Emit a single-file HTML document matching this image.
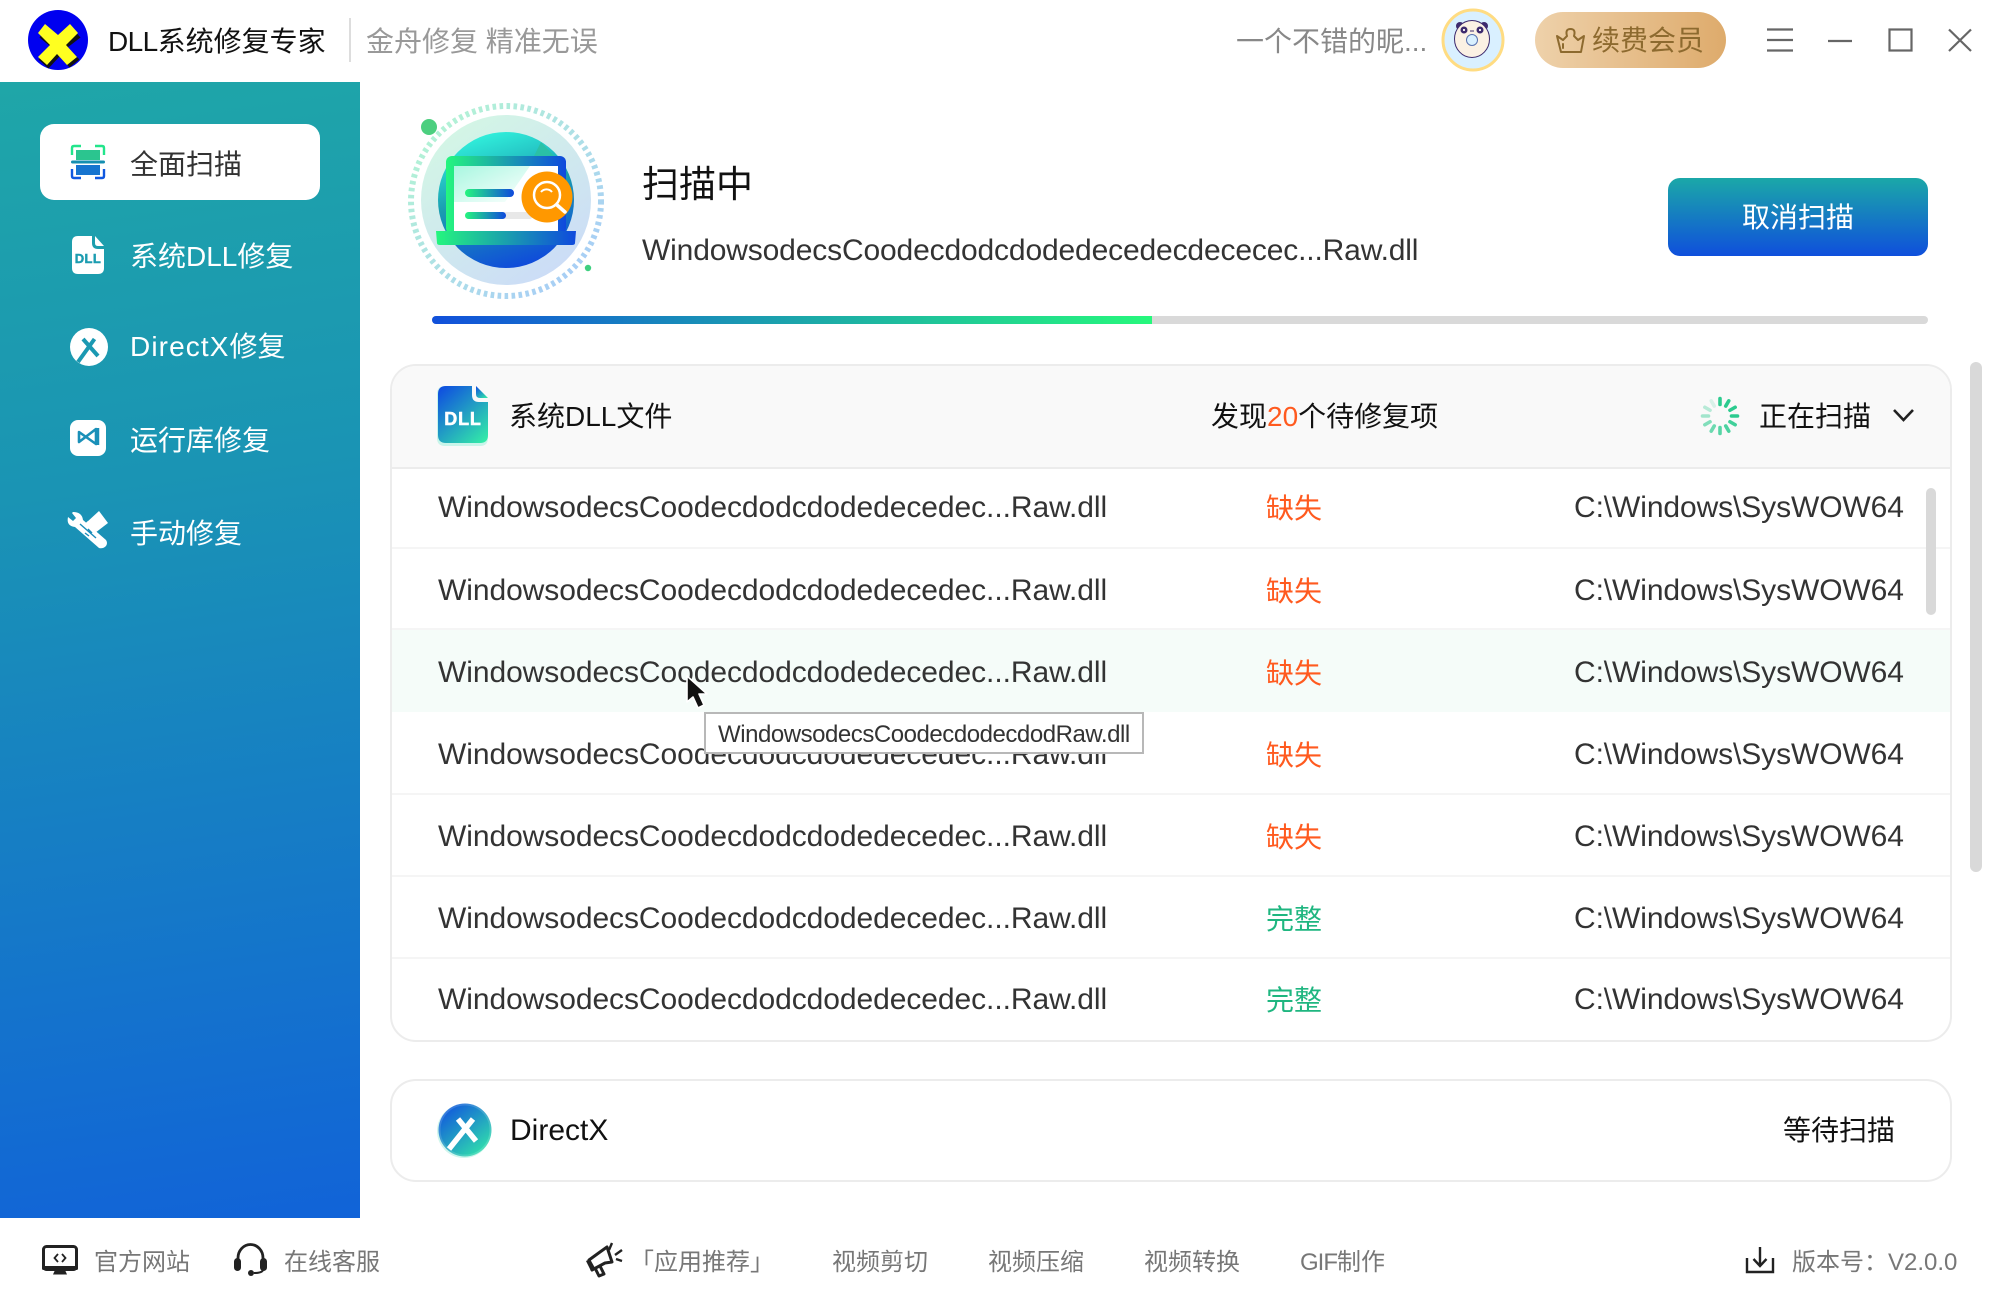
<!DOCTYPE html>
<html lang="zh-CN">
<head>
<meta charset="utf-8">
<title>DLL系统修复专家</title>
<style>
html,body{margin:0;padding:0;background:#fff}
body{width:2000px;height:1300px;position:relative;overflow:hidden;font-family:"Liberation Sans","Noto Sans CJK SC",sans-serif;color:#333}
.t{position:absolute;line-height:40px;height:40px;white-space:nowrap}
.abs{position:absolute}
svg{position:absolute;left:0;top:0;overflow:visible}
.side{position:absolute;left:0;top:82px;width:360px;height:1136px;background:linear-gradient(172deg,#1fa6a8 0%,#1a94b4 35%,#1163d8 100%)}
.active{position:absolute;left:40px;top:124px;width:280px;height:76px;background:#fff;border-radius:14px}
.nav{font-size:28px;color:#fff;left:130px}
.foot{font-size:24px;color:#777;top:1243px}
.card{position:absolute;left:390px;width:1562px;box-sizing:border-box;border:2px solid #ececec;border-radius:26px;background:#fff}
.name{left:438px;font-size:30px;letter-spacing:-.07px;color:#333}
.st{left:1266px;font-size:28px;color:#ff5a1f}
.ok{color:#1fb680}
.path{left:1574px;font-size:30px;color:#333;letter-spacing:-.1px}
.sep{position:absolute;left:392px;width:1558px;height:2px;background:#f5f5f5}
</style>
</head>
<body>
<div class="side"></div>
<div class="active"></div>

<div class="abs" style="left:349px;top:18px;width:2px;height:44px;background:#ddd"></div>
<div class="t" style="left:108px;top:22px;font-size:28px;color:#111"><span style="letter-spacing:-.6px">DLL</span>系统修复专家</div>
<div class="t" style="left:366px;top:22px;font-size:28px;color:#999">金舟修复 精准无误</div>
<div class="t" style="left:1236px;top:22px;font-size:28px;color:#888">一个不错的昵...</div>

<div class="abs" style="left:1535px;top:12px;width:191px;height:56px;border-radius:28px;background:linear-gradient(90deg,#eed1aa,#deab6c)"></div>
<div class="t" style="left:1592px;top:21px;font-size:28px;color:#8d6a2f">续费会员</div>

<div class="abs" style="left:1668px;top:178px;width:260px;height:78px;border-radius:12px;background:linear-gradient(180deg,#1ba8a8,#0f4fdc)"></div>
<div class="t" style="left:1742px;top:198px;font-size:28px;color:#fff">取消扫描</div>

<div class="t" style="left:642px;top:165px;font-size:37px;color:#111">扫描中</div>
<div class="t" style="left:642px;top:231px;font-size:30px;letter-spacing:-.15px;color:#333">WindowsodecsCoodecdodcdodedecedecdececec...Raw.dll</div>

<div class="abs" style="left:432px;top:316px;width:1496px;height:8px;border-radius:4px;background:#d9d9d9"></div>
<div class="abs" style="left:432px;top:316px;width:720px;height:8px;border-radius:4px 0 0 4px;background:linear-gradient(90deg,#1150db,#26f87c)"></div>

<div class="t nav" style="left:130px;top:145px;color:#333">全面扫描</div>
<div class="t nav" style="top:237px">系统DLL修复</div>
<div class="t nav" style="top:327px"><span style="letter-spacing:1.1px">DirectX</span>修复</div>
<div class="t nav" style="top:421px">运行库修复</div>
<div class="t nav" style="top:514px">手动修复</div>

<!-- card 1 -->
<div class="card" style="top:364px;height:678px"></div>
<div class="abs" style="left:392px;top:366px;width:1558px;height:101px;background:#f9f9f9;border-radius:24px 24px 0 0"></div>
<div class="abs" style="left:392px;top:467px;width:1558px;height:2px;background:#ececec"></div>
<div class="abs" style="left:392px;top:629px;width:1558px;height:83px;background:#f5fcf9"></div>
<div class="sep" style="top:547px"></div>
<div class="sep" style="top:628px"></div>
<div class="sep" style="top:793px"></div>
<div class="sep" style="top:875px"></div>
<div class="sep" style="top:957px"></div>

<div class="t" style="left:509px;top:397px;font-size:28px;color:#111">系统DLL文件</div>
<div class="t" style="left:1211px;top:397px;font-size:28px;color:#111">发现<span style="color:#ff5a1f">20</span>个待修复项</div>
<div class="t" style="left:1759px;top:397px;font-size:28px;color:#111">正在扫描</div>

<div class="t name" style="top:488px">WindowsodecsCoodecdodcdodedecedec...Raw.dll</div>
<div class="t st" style="top:489px">缺失</div>
<div class="t path" style="top:488px">C:\Windows\SysWOW64</div>

<div class="t name" style="top:571px">WindowsodecsCoodecdodcdodedecedec...Raw.dll</div>
<div class="t st" style="top:572px">缺失</div>
<div class="t path" style="top:571px">C:\Windows\SysWOW64</div>

<div class="t name" style="top:653px">WindowsodecsCoodecdodcdodedecedec...Raw.dll</div>
<div class="t st" style="top:654px">缺失</div>
<div class="t path" style="top:653px">C:\Windows\SysWOW64</div>

<div class="t name" style="top:735px">WindowsodecsCoodecdodcdodedecedec...Raw.dll</div>
<div class="t st" style="top:736px">缺失</div>
<div class="t path" style="top:735px">C:\Windows\SysWOW64</div>

<div class="t name" style="top:817px">WindowsodecsCoodecdodcdodedecedec...Raw.dll</div>
<div class="t st" style="top:818px">缺失</div>
<div class="t path" style="top:817px">C:\Windows\SysWOW64</div>

<div class="t name" style="top:899px">WindowsodecsCoodecdodcdodedecedec...Raw.dll</div>
<div class="t st ok" style="top:900px">完整</div>
<div class="t path" style="top:899px">C:\Windows\SysWOW64</div>

<div class="t name" style="top:980px">WindowsodecsCoodecdodcdodedecedec...Raw.dll</div>
<div class="t st ok" style="top:981px">完整</div>
<div class="t path" style="top:980px">C:\Windows\SysWOW64</div>

<div class="abs" style="left:1926px;top:488px;width:10px;height:127px;border-radius:5px;background:#d9d9d9"></div>
<div class="abs" style="left:1970px;top:362px;width:12px;height:510px;border-radius:6px;background:#d9d9d9"></div>

<!-- tooltip -->
<div class="abs" style="left:704px;top:712px;width:440px;height:42px;box-sizing:border-box;border:2px solid #b8b8b8;background:#fff"></div>
<div class="t" style="left:718px;top:715px;font-size:24px;letter-spacing:-.46px;color:#333">WindowsodecsCoodecdodecdodRaw.dll</div>

<!-- card 2 -->
<div class="card" style="top:1079px;height:103px"></div>
<div class="t" style="left:510px;top:1111px;font-size:30px;color:#111">DirectX</div>
<div class="t" style="left:1783px;top:1111px;font-size:28px;color:#111">等待扫描</div>

<!-- footer -->
<div class="t foot" style="left:94px">官方网站</div>
<div class="t foot" style="left:284px">在线客服</div>
<div class="t foot" style="left:630px">「应用推荐」</div>
<div class="t foot" style="left:832px">视频剪切</div>
<div class="t foot" style="left:988px">视频压缩</div>
<div class="t foot" style="left:1144px">视频转换</div>
<div class="t foot" style="left:1300px"><span style="letter-spacing:-1px">GIF</span>制作</div>
<div class="t foot" style="left:1792px">版本号：V2.0.0</div>

<svg width="2000" height="1300" viewBox="0 0 2000 1300" xmlns="http://www.w3.org/2000/svg" style="pointer-events:none">
<defs>
<linearGradient id="g1" x1="0" y1="0" x2="1" y2="1"><stop offset="0" stop-color="#b4f8d0"/><stop offset="1" stop-color="#a6c8fb"/></linearGradient>
<linearGradient id="g2" x1="0.15" y1="0" x2="0.85" y2="1"><stop offset="0" stop-color="#d4f8e4"/><stop offset="1" stop-color="#cbdaf8"/></linearGradient>
<linearGradient id="g3" x1="0.35" y1="0" x2="0.65" y2="1"><stop offset="0" stop-color="#31f1dc"/><stop offset=".45" stop-color="#1a9cb0"/><stop offset="1" stop-color="#0f48dc"/></linearGradient>
<linearGradient id="g4" x1="0" y1="0" x2="1" y2="0"><stop offset="0" stop-color="#25f67e"/><stop offset="1" stop-color="#0f49dd"/></linearGradient>
<linearGradient id="g5" x1="0" y1="0" x2="1" y2="1"><stop offset="0" stop-color="#a8f7e0"/><stop offset="1" stop-color="#ffffff"/></linearGradient>
<linearGradient id="g6" x1="0" y1="0" x2="0" y2="1"><stop offset="0" stop-color="#24e486"/><stop offset="1" stop-color="#0f50dc"/></linearGradient>
<linearGradient id="g7" x1="0.1" y1="0" x2="0.9" y2="1"><stop offset="0" stop-color="#0f4fe0"/><stop offset="1" stop-color="#33eaa8"/></linearGradient>
</defs>

<!-- logo -->
<circle cx="58" cy="40" r="30" fill="#0000f0"/>
<path d="M46 26 L58 36 L70 26 L79 36 L66 46 L78 58 L68 66 L58 55 L47 67 L37 58 L50 46 L38 36 Z" fill="#111" transform="translate(1.5 1.5)"/>
<path d="M45 24 L58 35 L70 24 L78 33 L66 45 L77 57 L67 65 L57 54 L47 65 L38 57 L50 45 L38 33 Z" fill="#ffff20"/>

<!-- illustration -->
<circle cx="506" cy="201" r="95" fill="none" stroke="url(#g1)" stroke-width="6" stroke-dasharray="3.6 3.4"/>
<circle cx="506" cy="200" r="85" fill="url(#g2)"/>
<circle cx="506" cy="200" r="68" fill="url(#g3)"/>
<path d="M541 142 L529 166 L558 166 L558 160 Z" fill="#2cbf9f" opacity=".8"/>
<rect x="446" y="156" width="120" height="78" rx="6" fill="url(#g4)"/>
<rect x="454" y="166" width="104" height="67" fill="#fff"/>
<path d="M454 166 H530 L505 202 H454 Z" fill="url(#g5)"/>
<rect x="465" y="189" width="49" height="8" rx="4" fill="url(#g4)"/>
<rect x="465" y="212" width="68" height="7" rx="3.5" fill="#e8e8e8"/>
<rect x="465" y="212" width="41" height="7" rx="3.5" fill="url(#g4)"/>
<path d="M436 231 H576 L575 243 Q575 245 572 245 H440 Q437 245 437 243 Z" fill="url(#g4)"/>
<circle cx="547" cy="197" r="25.5" fill="#ff9800"/>
<circle cx="547" cy="195" r="13" fill="none" stroke="#fff" stroke-width="2.5"/>
<path d="M541 192 a7 7 0 0 1 11 0" fill="none" stroke="#fff" stroke-width="2"/>
<path d="M557 205 L565 212" stroke="#fff" stroke-width="3.5" stroke-linecap="round"/>
<circle cx="429" cy="127" r="8" fill="#4ccf7f"/>
<circle cx="588" cy="268" r="3.2" fill="#3fcf80"/>

<!-- avatar -->
<circle cx="1473" cy="40" r="30" fill="#d9f0ff" stroke="#ffdc82" stroke-width="3"/>
<circle cx="1460" cy="26" r="4" fill="#3d2a6e"/>
<circle cx="1484" cy="26" r="4" fill="#3d2a6e"/>
<ellipse cx="1472" cy="39" rx="17.5" ry="18.5" fill="#fbf1e4" stroke="#3d2a6e" stroke-width="1"/>
<circle cx="1464" cy="30" r="3.5" fill="#3d2a6e"/>
<circle cx="1480" cy="30" r="3.5" fill="#3d2a6e"/>
<circle cx="1464" cy="30" r="1.1" fill="#fff"/>
<circle cx="1480" cy="30" r="1.1" fill="#fff"/>
<path d="M1470 31 h4" stroke="#3d2a6e" stroke-width="1"/>
<circle cx="1472" cy="40" r="5.5" fill="#d9f0ff" stroke="#5a73b0" stroke-width="1"/>

<!-- crown -->
<path d="M1557 36 L1563 40 L1567 36 Q1565 29 1570.5 29 Q1576 29 1574 36 L1578 40 L1584 36 L1581 52 H1561 Z" fill="none" stroke="#8d6a2f" stroke-width="2" stroke-linejoin="round"/>
<path d="M1563 44 V48" stroke="#8d6a2f" stroke-width="2" stroke-linecap="round"/>

<!-- window controls -->
<g stroke="#666" stroke-width="2.2" fill="none">
<path d="M1767 29.5 H1793 M1767 40 H1793 M1767 50.5 H1793"/>
<path d="M1828 41 H1852"/>
<rect x="1889.5" y="29.5" width="22" height="21"/>
<path d="M1949 29.5 L1971 51 M1971 29.5 L1949 51"/>
</g>

<!-- sidebar icons -->
<g fill="none" stroke-width="2.4">
<path d="M72 155 V148 Q72 146 74 146 H81 M95 146 H102 Q104 146 104 148 V155" stroke="#22e58b"/>
<path d="M72 169 V176 Q72 178 74 178 H81 M95 178 H102 Q104 178 104 176 V169" stroke="#1058e0"/>
</g>
<rect x="76" y="150" width="24" height="10" fill="#2bc58f"/>
<rect x="76" y="165" width="24" height="10" fill="#1674cf"/>
<rect x="71" y="160.5" width="34" height="3" rx="1.5" fill="#158fb0"/>

<path d="M78 236 H92 V243 Q92 249 98 249 H104 V268 Q104 274 98 274 H78 Q72 274 72 268 V242 Q72 236 78 236 Z" fill="#fff"/>
<path d="M95 236 L104 246 H98 Q95 246 95 243 Z" fill="#fff"/>
<text x="88" y="263" font-family="Liberation Sans,sans-serif" font-size="13" font-weight="bold" fill="#1c9cb0" stroke="#1c9cb0" stroke-width=".5" text-anchor="middle" letter-spacing=".4">DLL</text>

<circle cx="89" cy="347" r="19" fill="#fff"/>
<path d="M94.5 339 L78 362 M83 339 L98 356" stroke="#1b99b2" stroke-width="4" fill="none"/>

<rect x="70" y="420" width="36" height="36" rx="8" fill="#fff"/>
<path d="M79 432 L96 444 V429 L79 442 Z" fill="none" stroke="#1a90b8" stroke-width="2.6" stroke-linejoin="round"/>
<path d="M97.5 428 V445" stroke="#1a90b8" stroke-width="3.5"/>

<g fill="#fff">
<path d="M68 517 Q66 526 75 527 L99 548 Q103 549 106 546 Q108 543 106 540 L83 520 Q82 512 73 512 L72 513 L76 518 L73 521 Z"/>
<path d="M87 522 L99 511 L108 523 L95 533 Z"/>
<path d="M82 526 L88 521 L96 532 L92 541 L84 534 Z"/>
</g>
<path d="M88 529 L92 533 M85 533 L89 536 M80 524 L96 538" stroke="#1a8cba" stroke-width="1.4"/>

<!-- section icons -->
<path d="M445 386 H472 V396 Q472 402 478 402 H488 V438 Q488 446 480 446 H445 Q437 446 437 438 V394 Q437 386 445 386 Z" fill="#c8f5ea"/>
<path d="M446 386 H472 V395 Q472 402 479 402 H488 V435 Q488 443 480 443 H446 Q438 443 438 435 V394 Q438 386 446 386 Z" fill="url(#g7)"/>
<path d="M476 386 L488 398 H480 Q476 398 476 394 Z" fill="url(#g7)"/>
<text x="463" y="425" font-family="Liberation Sans,sans-serif" font-size="18" font-weight="bold" fill="#fff" stroke="#fff" stroke-width=".5" text-anchor="middle" letter-spacing=".8">DLL</text>

<circle cx="464" cy="1131" r="27" fill="#c8f5ea"/>
<circle cx="465" cy="1130" r="26.5" fill="url(#g7)"/>
<circle cx="465" cy="1130" r="26.5" fill="none" stroke="#fff" stroke-opacity=".15" stroke-width="4"/>
<path d="M473 1119 L449 1149 M458 1119 L476 1141" stroke="#fff" stroke-width="5.5" fill="none"/>

<!-- spinner -->
<g stroke="#22c98a" stroke-width="3.6" stroke-linecap="round" transform="translate(1720 416)">
<line x1="0" y1="-11.5" x2="0" y2="-17.5" opacity=".95" transform="rotate(0)"/>
<line x1="0" y1="-11.5" x2="0" y2="-17.5" opacity=".95" transform="rotate(30)"/>
<line x1="0" y1="-11.5" x2="0" y2="-17.5" opacity=".95" transform="rotate(60)"/>
<line x1="0" y1="-11.5" x2="0" y2="-17.5" opacity=".95" transform="rotate(90)"/>
<line x1="0" y1="-11.5" x2="0" y2="-17.5" opacity=".85" transform="rotate(120)"/>
<line x1="0" y1="-11.5" x2="0" y2="-17.5" opacity=".8" transform="rotate(150)"/>
<line x1="0" y1="-11.5" x2="0" y2="-17.5" opacity=".75" transform="rotate(180)"/>
<line x1="0" y1="-11.5" x2="0" y2="-17.5" opacity=".65" transform="rotate(210)"/>
<line x1="0" y1="-11.5" x2="0" y2="-17.5" opacity=".55" transform="rotate(240)"/>
<line x1="0" y1="-11.5" x2="0" y2="-17.5" opacity=".4" transform="rotate(270)"/>
<line x1="0" y1="-11.5" x2="0" y2="-17.5" opacity=".3" transform="rotate(300)"/>
<line x1="0" y1="-11.5" x2="0" y2="-17.5" opacity=".15" transform="rotate(330)"/>
</g>
<path d="M1894 410 L1903.5 420 L1913 410" fill="none" stroke="#222" stroke-width="2.6"/>

<!-- cursor -->
<path d="M687 676 V702 L693 697 L698 708 L704 705 L699 694 L707 694 Z" fill="#111" stroke="#fff" stroke-width="1.6" stroke-linejoin="round"/>

<!-- footer icons -->
<rect x="43.5" y="1246.5" width="33" height="23" rx="3" fill="#fff" stroke="#222" stroke-width="3"/>
<rect x="42" y="1266" width="36" height="4" rx="1.5" fill="#222"/>
<path d="M55 1270 H65 L67 1274.5 H53 Z" fill="#222"/>
<path d="M58 1254 L54.5 1258 L58 1262 M62 1254 L65.5 1258 L62 1262" fill="none" stroke="#222" stroke-width="1.8"/>

<path d="M238 1262 V1258 A12.5 13.5 0 0 1 263 1258 V1262" fill="none" stroke="#222" stroke-width="2.8"/>
<rect x="234" y="1258" width="7" height="13" rx="3.5" fill="#222"/>
<rect x="260" y="1258" width="7" height="13" rx="3.5" fill="#222"/>
<path d="M263 1270 Q262 1273 254 1273" fill="none" stroke="#222" stroke-width="2"/>
<circle cx="251" cy="1273" r="3" fill="#222"/>

<g fill="none" stroke="#222" stroke-width="3" stroke-linejoin="round">
<path d="M589 1260 L600 1252 L607 1247 L612 1262 L605 1263 L592 1270 Z"/>
<path d="M595 1268 L599 1276 L604 1274 L600 1266"/>
</g>
<path d="M586 1261 L591 1271 L595 1268 L590 1259 Z" fill="#222"/>
<path d="M612 1243 L609 1250 M622 1250 L615 1255 M622 1261 L616 1259" stroke="#222" stroke-width="2.4" fill="none"/>

<path d="M1760 1247 V1266 M1753.5 1259 L1760 1266 L1766.5 1259" fill="none" stroke="#222" stroke-width="2.4"/>
<path d="M1747 1258 V1272 H1773 V1258" fill="none" stroke="#222" stroke-width="2.4"/>
</svg>
</body>
</html>
